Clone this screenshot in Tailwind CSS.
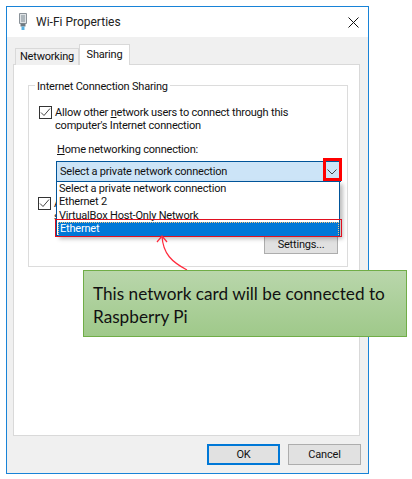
<!DOCTYPE html>
<html lang="en">
<head>
  <meta charset="UTF-8" />
  <title>Wi-Fi Properties</title>
  <script src="https://cdn.jsdelivr.net/npm/@tailwindcss/browser@4"></script>
</head>
<body class="bg-white font-['Roboto',sans-serif] text-[11px] leading-[13px] tracking-[-0.2px] text-[#111] overflow-hidden">
  <div class="relative w-[412px] h-[479px] pl-[6px] pt-[6px]">
    <!-- dialog window -->
    <div class="w-[363px] h-[468px] border border-[#1883d7] flex flex-col">
      <div class="h-[30px] shrink-0 bg-white flex items-center pl-[10px] pr-[9px]">
        <svg width="12" height="18" viewBox="0 0 12 18" class="shrink-0">
          <path d="M2.500.5h7v10h-7z" fill="#dfe3e6" stroke="#8a9299"/>
          <path d="M4 2h4v7H4z" fill="#aeb7bd"/>
          <path d="M3.500 10.500h5v3h-5z" fill="#6f7a82"/>
          <path d="M4.500 13.500h3v3.500h-3z" fill="#57b1e3"/>
        </svg>
        <span class="ml-[7px] text-[12px] tracking-[0px] text-[#222]">Wi-Fi Properties</span>
        <svg width="11" height="11" viewBox="0 0 11 11" class="ml-auto"><path d="M.5.5l10 10M10.500.5l-10 10" stroke="#111" fill="none"/></svg>
      </div>
      <div class="flex-1 bg-[#f0f0f0] pl-[6px] pr-[8px] pt-[7px] flex flex-col">
        <!-- tabs -->
        <div class="flex items-end pl-[2px] h-[21px] relative z-10 -mb-px">
          <div class="w-[64px] h-[17px] bg-[#f0f0f0] border border-b-0 border-[#d9d9d9] flex items-center justify-center pb-[1px]">Networking</div>
          <div class="w-[51px] h-[21px] bg-white border border-b-0 border-[#d9d9d9] flex items-center justify-center pb-[2px]">Sharing</div>
        </div>
        <!-- tab panel -->
        <div class="h-[372px] bg-white border border-[#d9d9d9] pl-[14px] pt-[20px]">
          <div class="relative w-[320px] h-[182px] border border-[#dcdcdc] pl-[10px] pt-[20px]">
            <span class="absolute left-[6px] -top-[6px] bg-white px-[2px]">Internet Connection Sharing</span>
            <div class="flex gap-[3px]">
              <span class="w-[13px] h-[13px] shrink-0 border border-[#333] bg-white flex items-center justify-center">
                <svg width="11" height="11" viewBox="0 0 11 11"><path d="M1 5.500l3 3 6-7" fill="none" stroke="#444"/></svg>
              </span>
              <p>Allow other <u>n</u>etwork users to connect through this<br />computer's Internet connection</p>
            </div>
            <p class="mt-[11px] ml-[18px]"><u>H</u>ome networking connection:</p>
            <!-- combo box -->
            <div class="mt-[5px] ml-[17px] w-[285px] h-[21px] bg-[#cce4f7] border border-[#005499] flex items-center pl-[3px]">
              <span>Select a private network connection</span>
              <svg width="10" height="6" viewBox="0 0 10 6" class="ml-auto mr-[3px]"><path d="M.5.5L5 5 9.500.5" fill="none" stroke="#444"/></svg>
            </div>
            <div class="flex gap-[3px] mt-[15px] -ml-px">
              <span class="w-[13px] h-[13px] shrink-0 border border-[#333] bg-white flex items-center justify-center">
                <svg width="11" height="11" viewBox="0 0 11 11"><path d="M1 5.500l3 3 6-7" fill="none" stroke="#444"/></svg>
              </span>
              <p>A<br />s</p>
            </div>
            <div class="absolute left-[235px] top-[148px] w-[74px] h-[20px] bg-[#e1e1e1] border border-[#adadad] flex items-center justify-center">Settin<u>g</u>s...</div>
          </div>
        </div>
        <!-- buttons -->
        <div class="flex justify-end gap-[8px] mt-[8px] -mr-px">
          <div class="w-[73px] h-[21px] bg-[#e1e1e1] border-2 border-[#0078d7] flex items-center justify-center">OK</div>
          <div class="w-[73px] h-[21px] bg-[#e1e1e1] border border-[#adadad] flex items-center justify-center">Cancel</div>
        </div>
      </div>
    </div>

    <!-- open dropdown list -->
    <div class="absolute left-[56px] top-[181px] w-[284px] h-[55px] bg-white border border-[#005499] shadow-[3px_3px_4px_rgba(0,0,0,0.25)] pl-[2px]">
      <div class="h-[13px]">Select a private network connection</div>
      <div class="h-[13px]">Ethernet 2</div>
      <div class="h-[13px] mt-[1px]">VirtualBox Host-Only Network</div>
      <div class="h-[15px] -ml-[1px] pl-[1px] bg-[#0078d7] text-white leading-[12px] border border-dotted border-[#f5c77e]">Ethernet</div>
    </div>

    <!-- red annotations -->
    <div class="absolute left-[323px] top-[158px] w-[19px] h-[23px] border-[3px] border-[#f00]"></div>
    <div class="absolute left-[55px] top-[219px] w-[287px] h-[18px] border border-[#e01020]"></div>
    <svg class="absolute left-0 top-0" width="412" height="479" viewBox="0 0 412 479">
      <path d="M187 270C172 262 163 254 162 236" fill="none" stroke="#ff2a3c" stroke-width="1.200"/>
      <path d="M157 242l5-6 5 6" fill="none" stroke="#ff2a3c" stroke-width="1.200"/>
    </svg>

    <!-- callout -->
    <div class="absolute left-[83px] top-[270px] w-[324px] h-[67px] border border-[#70ad47] bg-gradient-to-b from-[#b9d6ab] to-[#9fc98a] pl-[9px] pt-[11px] font-['Lato',sans-serif] text-[17.200px] tracking-normal leading-[23px] text-[#111]">
      This network card will be connected to<br />Raspberry Pi
    </div>
  </div>
</body>
</html>
